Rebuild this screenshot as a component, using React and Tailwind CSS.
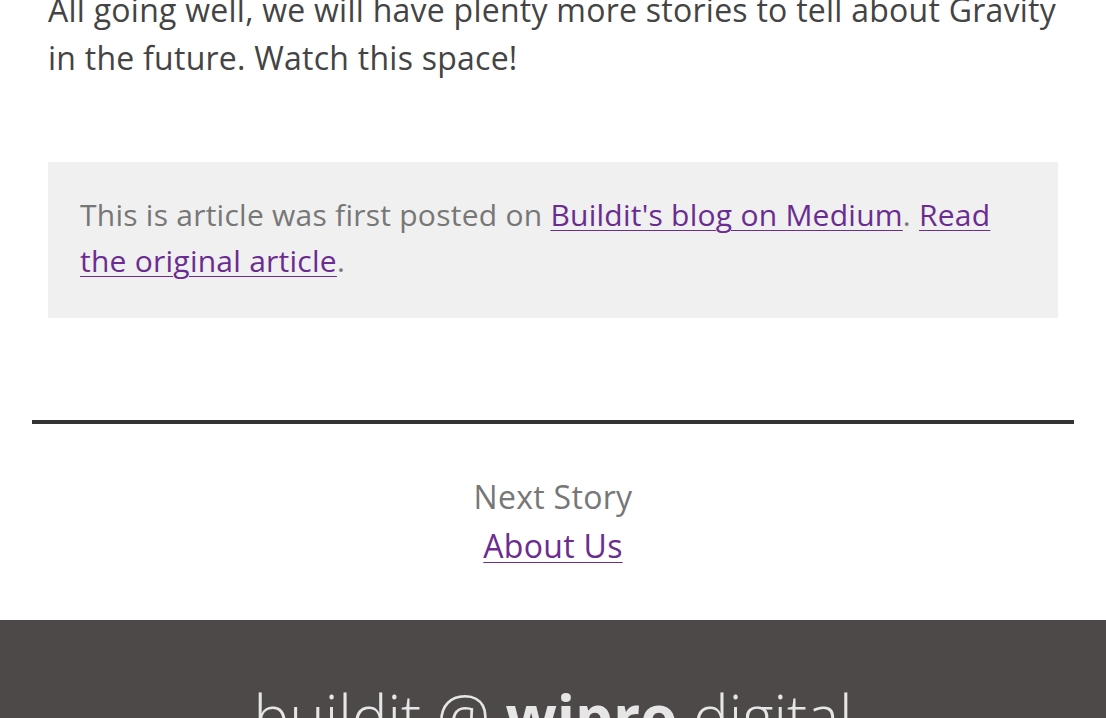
export default function App() {
  return (
    <div className="min-h-[718px] bg-white overflow-hidden font-['Open_Sans',sans-serif]">
      {/* article tail */}
      <div className="px-12 -mt-[14px]">
        <p className="text-[32px] leading-[48px] tracking-[0.25px] text-[#444]">
          All going well, we will have plenty more stories to tell about Gravity
          in the future. Watch this space!
        </p>
        <div className="mt-[80px] bg-[#f0f0f0] px-8 pt-[30px] pb-[34px] text-[30px] leading-[46px] tracking-[0.25px] text-[#777]">
          This is article was first posted on{" "}
          <a href="#" className="text-[#6b2c91] underline underline-offset-4 decoration-1">
            Buildit's blog on Medium
          </a>
          .{" "}
          <a href="#" className="text-[#6b2c91] underline underline-offset-4 decoration-1">
            Read the original article
          </a>
          .
        </div>
      </div>

      {/* next story */}
      <div className="px-8 mt-[102px]">
        <div className="h-1 bg-[#333]" />
        <div className="flex flex-col items-center pt-[48px] pb-[50px] text-[32px] leading-[49px] tracking-[0.3px]">
          <span className="text-[#777]">Next Story</span>
          <a href="#" className="text-[#6b2c91] underline underline-offset-4 decoration-1">
            About Us
          </a>
        </div>
      </div>

      {/* footer */}
      <footer className="bg-[#4d4948] pt-[64px] pb-10 flex justify-center">
        <span className="text-[#e6e6e6] text-[60px] leading-[64px] font-light">
          buildit @ <span className="font-bold">wipro</span> digital
        </span>
      </footer>
    </div>
  );
}
